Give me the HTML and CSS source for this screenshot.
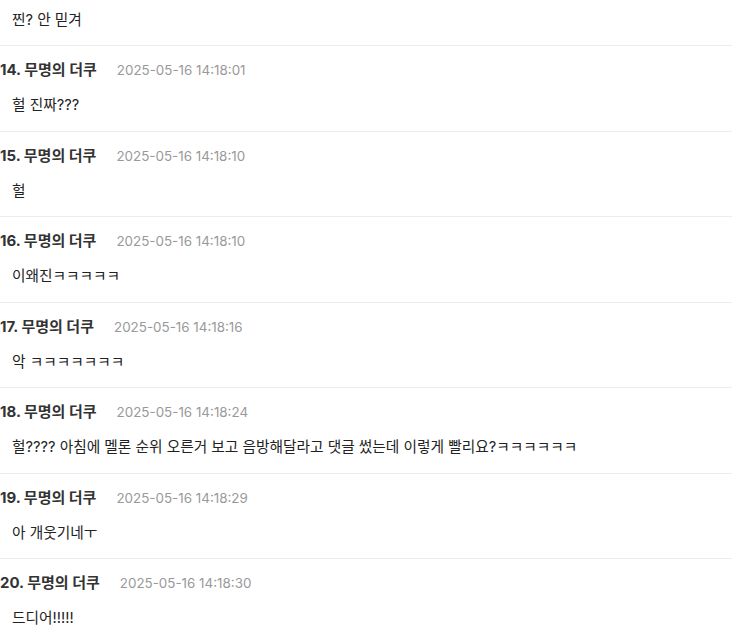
FILE: index.html
```html
<!DOCTYPE html>
<html lang="ko">
<head>
  <meta charset="UTF-8">
  <title>댓글</title>
  <link rel="stylesheet" href="styles.css">
</head>
<body>
  <!-- Comment list -->
  <ul id="comment-list">
    <li class="comment">
      <div class="comment-head"><span class="comment-name">13. 무명의 더쿠</span><span class="comment-time">2025-05-16 14:17:58</span></div>
      <p class="comment-body">찐? 안 믿겨</p>
    </li>
    <li class="comment">
      <div class="comment-head"><span class="comment-name">14. 무명의 더쿠</span><span class="comment-time">2025-05-16 14:18:01</span></div>
      <p class="comment-body">헐 진짜???</p>
    </li>
    <li class="comment">
      <div class="comment-head"><span class="comment-name">15. 무명의 더쿠</span><span class="comment-time">2025-05-16 14:18:10</span></div>
      <p class="comment-body">헐</p>
    </li>
    <li class="comment">
      <div class="comment-head"><span class="comment-name">16. 무명의 더쿠</span><span class="comment-time">2025-05-16 14:18:10</span></div>
      <p class="comment-body">이왜진ㅋㅋㅋㅋㅋ</p>
    </li>
    <li class="comment">
      <div class="comment-head"><span class="comment-name">17. 무명의 더쿠</span><span class="comment-time">2025-05-16 14:18:16</span></div>
      <p class="comment-body">악 ㅋㅋㅋㅋㅋㅋㅋ</p>
    </li>
    <li class="comment">
      <div class="comment-head"><span class="comment-name">18. 무명의 더쿠</span><span class="comment-time">2025-05-16 14:18:24</span></div>
      <p class="comment-body">헐???? 아침에 멜론 순위 오른거 보고 음방해달라고 댓글 썼는데 이렇게 빨리요?ㅋㅋㅋㅋㅋㅋ</p>
    </li>
    <li class="comment">
      <div class="comment-head"><span class="comment-name">19. 무명의 더쿠</span><span class="comment-time">2025-05-16 14:18:29</span></div>
      <p class="comment-body">아 개웃기네ㅜ</p>
    </li>
    <li class="comment">
      <div class="comment-head"><span class="comment-name">20. 무명의 더쿠</span><span class="comment-time">2025-05-16 14:18:30</span></div>
      <p class="comment-body">드디어!!!!!</p>
    </li>
  </ul>
</body>
</html>
```

FILE: styles.css
```css
body {
  margin: 0;
  background: #fff;
  font-family: Inter, "Noto Sans CJK KR", sans-serif;
  color: #222;
  overflow: hidden;
}
#comment-list {
  list-style: none;
  margin: -39.5px 0 0 0;
  padding: 0;
}
.comment {
  padding: 14.25px 0 15.25px 0;
  border-bottom: 1px solid #ececec;
}
.comment-head {
  display: flex;
  align-items: baseline;
  height: 20px;
  line-height: 20px;
}
.comment-name {
  font-size: 15px;
  font-weight: 700;
  color: #333;
}
.comment-time {
  margin-left: 20px;
  font-size: 13.4px;
  color: #999;
}
.comment-body {
  margin: 15px 0 0 12px;
  font-size: 14.7px;
  line-height: 20px;
  color: #222;
}
```
